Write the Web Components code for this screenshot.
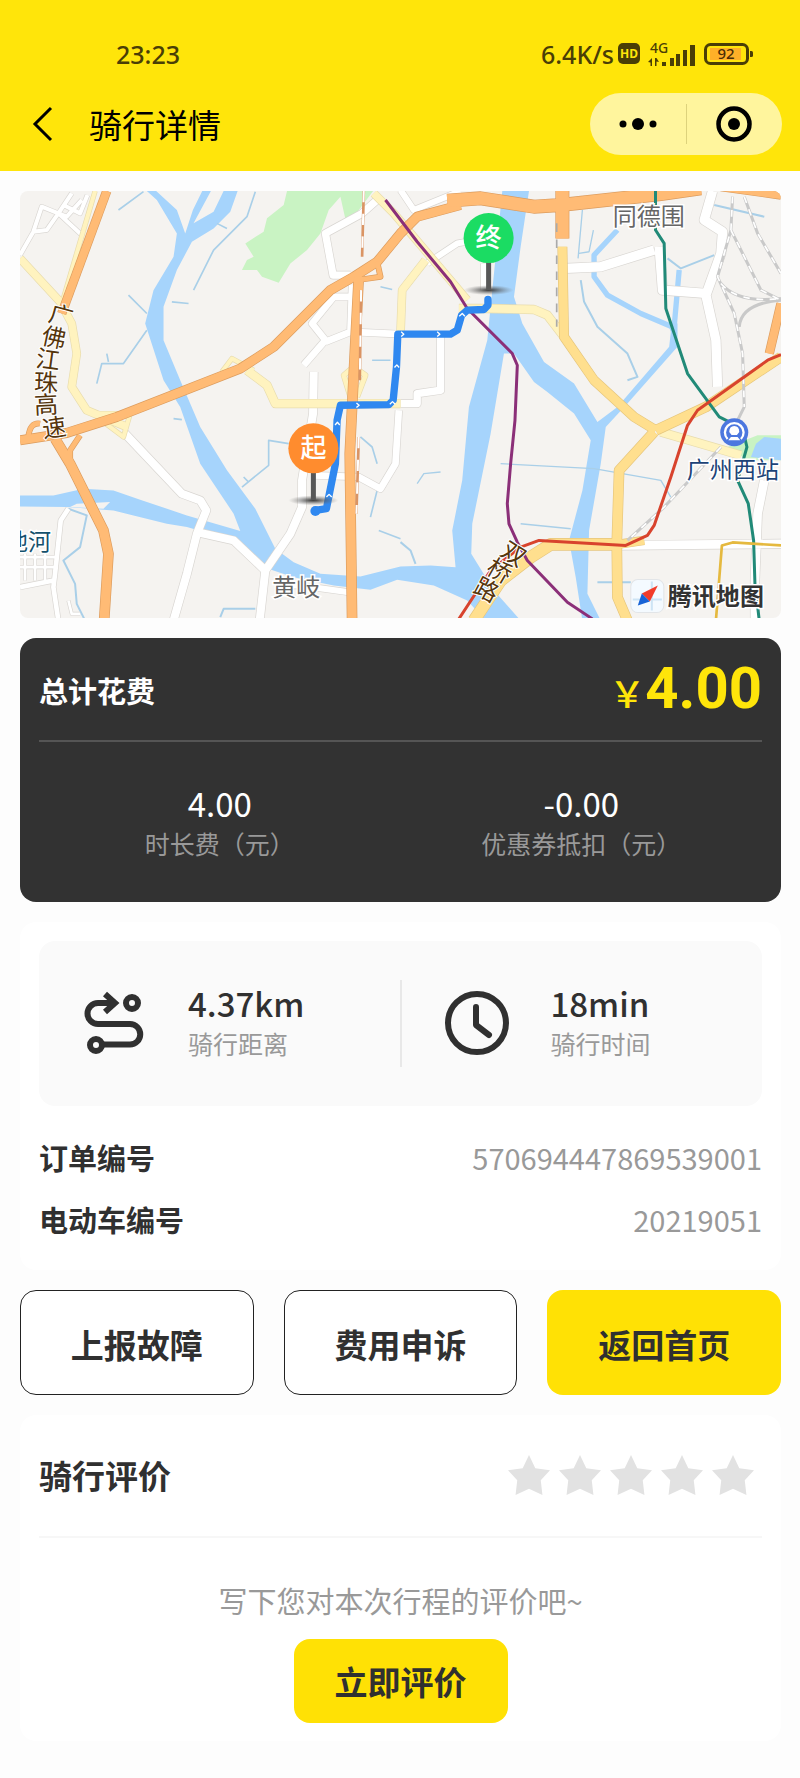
<!DOCTYPE html>
<html lang="zh-CN">
<head>
<meta charset="utf-8">
<meta name="viewport" content="width=device-width, initial-scale=1">
<title>骑行详情</title>
<style>
  body {
    margin: 0;
    background: #fdfdfd;
    color: #303030;
    font-family: "Noto Sans CJK SC", "Noto Sans", sans-serif;
  }
</style>
</head>
<body>
<ride-page>
  <ride-header slot="header">骑行详情</ride-header>
  <ride-map></ride-map>
  <cost-card total="4.00">
    <cost-item value="4.00">时长费（元）</cost-item>
    <cost-item value="-0.00">优惠券抵扣（元）</cost-item>
  </cost-card>
  <ride-info>
    <ride-stat slot="stats" icon="route" value="4.37km">骑行距离</ride-stat>
    <ride-stat slot="stats" icon="clock" value="18min">骑行时间</ride-stat>
    <info-row value="570694447869539001">订单编号</info-row>
    <info-row value="20219051">电动车编号</info-row>
  </ride-info>
  <button-row>
    <ride-button kind="outline">上报故障</ride-button>
    <ride-button kind="outline">费用申诉</ride-button>
    <ride-button>返回首页</ride-button>
  </button-row>
  <review-card>
    <span slot="title">骑行评价</span>
    <span slot="hint">写下您对本次行程的评价吧~</span>
    <ride-button slot="action" size="small">立即评价</ride-button>
  </review-card>
</ride-page>

<script>
// Attach an open shadow root filled with the given markup
function render(host, html) {
  const shadow = host.attachShadow({ mode: 'open' });
  const template = document.createElement('template');
  template.innerHTML = html;
  shadow.appendChild(template.content.cloneNode(true));
  return shadow;
}


class RidePage extends HTMLElement {
  constructor() {
    super();
    render(this, `
      <style>
        :host { display: block; }
        main {
          display: flex;
          flex-direction: column;
          gap: 20px;
          padding: 20px 19px 36px 20px;
        }
      </style>
      <slot name="header"></slot>
      <main><slot></slot></main>
    `);
  }
}
customElements.define('ride-page', RidePage);


// Status bar, back button, page title and the mini program capsule
class RideHeader extends HTMLElement {
  constructor() {
    super();
    render(this, `
      <style>
        :host { display: block; background: #ffe50a; padding-bottom: 16px; }
        .status {
          display: flex;
          align-items: center;
          padding: 37px 46px 0 116px;
          height: 34px;
          font: 500 25px/34px "Noto Sans", sans-serif;
          color: #4a3e06;
        }
        .speed { margin-left: auto; }
        .status svg { display: block; flex: none; overflow: visible; }
        .hd { margin: 0 8px 0 4px; }
        .signal { margin-right: 8px; }
        nav {
          display: flex;
          align-items: center;
          margin-top: 22px;
          padding: 0 18px 0 29px;
          color: #000;
        }
        button { border: 0; padding: 0; margin: 0; background: none; color: inherit; display: grid; place-items: center; }
        .back { width: 28px; height: 44px; }
        h1 { margin: 0 auto 0 32px; font-size: 33px; line-height: 48px; font-weight: 400; }
        .capsule {
          display: flex;
          align-items: center;
          width: 192px;
          height: 62px;
          border-radius: 31px;
          background: #fff59d;
        }
        .capsule button { flex: 1; height: 100%; }
        .capsule i { width: 1px; height: 40px; background: #ddd27c; }
      </style>
      <div class="status">
        <span>23:23</span>
        <span class="speed">6.4K/s</span>
        <svg class="hd" width="22" height="22" viewBox="0 0 22 22">
          <rect width="22" height="21" rx="5" fill="#4a3e06"/>
          <text x="11" y="15" text-anchor="middle" font-size="12" font-weight="700" fill="#ffe50a">HD</text>
        </svg>
        <svg class="signal" width="48" height="26" viewBox="0 0 48 26" fill="#4a3e06">
          <text x="2" y="12" font-size="14">4G</text>
          <path d="M4 17v8h-1.500v-3.500l-2.500-.5zM7 25v-8h1.500l2.500 4-2.500-.5V25z"/>
          <path d="M14 21h4v4h-4zM22 17h4v8h-4zM28 13h4v12h-4zM35 9h4v16h-4zM42 4h5v21h-5z"/>
        </svg>
        <svg width="50" height="22" viewBox="0 0 50 22">
          <rect x="1.500" y="1.500" width="42" height="19" rx="5" fill="none" stroke="#4a3e06" stroke-width="3"/>
          <rect x="6" y="5" width="31" height="12" fill="#ffb028"/>
          <path d="M46 8h1.500q1.500 0 1.500 1.500v3q0 1.500-1.500 1.500H46z" fill="#4a3e06"/>
          <text x="22" y="16" text-anchor="middle" font-size="15" font-weight="500" fill="#4a2c06">92</text>
        </svg>
      </div>
      <nav>
        <button class="back" aria-label="返回">
          <svg width="22" height="36" viewBox="0 0 22 36" fill="none" stroke="currentColor" stroke-width="3"><path d="M19 2 3 18l16 16"/></svg>
        </button>
        <h1><slot></slot></h1>
        <div class="capsule">
          <button aria-label="更多">
            <svg width="38" height="14" viewBox="0 0 38 14"><circle cx="4" cy="7" r="3.500"/><circle cx="19" cy="7" r="6"/><circle cx="34" cy="7" r="3.500"/></svg>
          </button>
          <i></i>
          <button aria-label="关闭">
            <svg width="36" height="36" viewBox="0 0 36 36"><circle cx="18" cy="18" r="15.500" fill="none" stroke="#000" stroke-width="4.500"/><circle cx="18" cy="18" r="6"/></svg>
          </button>
        </div>
      </nav>
    `);
  }
}
customElements.define('ride-header', RideHeader);


// Roads of the map, from the bottom layer to the top one.
// Each layer: fill colour, casing colour, then [width, path] pairs.
const ROADS = [
  ['#ffffff', '#d9d6d2', [
    [12, 'M60 225 L100 155 L125 80 L175 100 L215 40 M100 155 L140 150 L175 100 L245 165 M175 100 L200 110 L245 60 M190 75 L240 100 L262 45'],
    [22, 'M1130 60 L1085 100 L975 160 L998 285 L1050 285'],
    [20, 'M1055 315 L1050 460 M1050 350 L1000 350 L935 430 L975 480 L910 555 M975 485 L1050 455 L1200 462'],
    [24, 'M940 575 L938 700 L905 900 L905 980 L870 1060 L795 1170 L778 1320'],
    [20, 'M940 885 L1075 890 L1140 925 L1185 850 L1195 690'],
    [24, 'M370 755 L545 940 L600 960 L618 990 L590 1060 L560 1180 L520 1320'],
    [24, 'M590 1055 L700 1080 L795 1170'],
    [14, 'M205 985 L182 1020 L165 1180 L160 1220 L175 1320 M60 1220 L160 1200'],
    [8, 'M60 1130 H165 M60 1160 H165 M75 1120 V1200 M105 1120 V1200 M135 1120 V1200 M205 1260 L215 1300 L240 1300'],
    [18, 'M1200 30 L1240 90 L1380 33 M1280 250 L1370 190 L1400 185 M1450 250 V330'],
    [22, 'M1320 470 V630 L1250 640 V670 L1200 670'],
    [28, 'M1695 265 L1800 260 L1960 210 M1975 200 L1985 330 L2115 340'],
    [28, 'M2135 33 L2110 120 L2165 155 L2160 220 L2115 345 L2145 480 L2150 620'],
    [26, 'M1860 1095 L2340 1090 M2290 900 L2270 1000 L2262 1200 L2262 1320'],
    [18, 'M830 1215 L900 1215 L1045 1235']
  ]],
  ['#fff3bf', '#e8dcae', [
    [22, 'M60 235 L180 365 L215 430 L230 520 L215 620 L260 690 L380 740'],
    [12, 'M285 33 L190 355 M290 700 L390 700 L370 770 L290 710 M665 575 L695 535 L760 570'],
    [24, 'M740 570 L800 615 L825 670 L1200 670 M1375 385 L1460 385 L1600 388 L1640 405 L1690 470'],
    [14, 'M1060 560 L1030 585 L1050 650 M1060 560 L1095 585 L1070 650'],
    [22, 'M1120 40 L1180 100 L1400 360 M1200 460 L1205 330 L1275 240'],
    [24, 'M1980 755 L2220 825']
  ]],
  ['#ffdf8e', '#e6c67d', [
    [26, 'M1685 200 L1690 470 L1780 600 L1900 710 L1965 750'],
    [28, 'M1965 750 L2115 680 L2340 530 M1960 755 L1855 870 L1848 1090 L1850 1250 L1880 1320'],
    [34, 'M1850 1092 L1650 1092 L1590 1130 L1500 1200 L1420 1320'],
    [24, 'M1850 1092 L1930 1080']
  ]],
  ['#ffbb75', '#dc9c5e', [
    [24, 'M320 33 L185 400'],
    [26, 'M60 780 L200 758 L350 710 L720 565 L820 500 L990 330 L1060 290 L1130 245 L1200 160 L1250 110 L1380 75'],
    [14, 'M85 770 Q90 725 120 730 M240 765 L210 810 L210 850 M1130 245 L1140 290 L1070 300'],
    [28, 'M165 775 L210 850 L310 1050 L325 1120 L312 1320'],
    [28, 'M1075 290 L1065 480 L1048 820 L1055 1320'],
    [38, 'M1340 62 L1440 55 L1600 80 L1680 75 L1980 42 L2100 25 M1685 33 L1685 175'],
    [24, 'M2160 20 L2340 45 M2340 370 L2305 520']
  ]]
];

const THIN_WATER = [
  [5, 'M580 330 L640 210 L740 110 L765 35 M650 130 L680 145 M355 90 L430 35'],
  [5, 'M290 610 L305 550 L370 550 L440 450 M440 400 L385 345 M320 520 L325 545 M515 365 L565 370 M520 715 L545 718'],
  [5, 'M865 790 L805 780 L805 855 L725 920 M730 890 L745 905 M1080 770 L1115 800 L1130 850 M1130 930 L1110 1010 M1135 1050 L1200 1075 M1115 540 L1170 540 M1140 320 L1175 328'],
  [6, 'M205 985 L260 1005 L240 1100 L190 1140 L225 1210 L230 1270 L255 1320 M660 1310 L670 1285 L765 1285'],
  [4, 'M1735 220 L1765 215 L1778 150 M1745 90 L1732 235 M1500 850 L1780 865 L1980 900 L2010 950 M1250 910 L1270 880 L1320 875 M1560 1030 L1710 1045'],
  [6, 'M1750 365 L1790 440 L1880 520 L1910 590 L1880 600 M1740 300 L1750 365 M1790 1205 H1890 M2140 75 L2290 110 M2000 235 L2040 265 L2140 225 M1200 1085 L1230 1110 L1245 1150']
];

class RideMap extends HTMLElement {
  constructor() {
    super();
    const roads = ROADS.map(([fill, casing, list]) =>
      list.map(([w, d]) => `<path d="${d}" stroke="${casing}" stroke-width="${w + 4}"/>`).join('') +
      list.map(([w, d]) => `<path d="${d}" stroke="${fill}" stroke-width="${w}"/>`).join('')
    ).join('');
    const streams = THIN_WATER.map(([w, d]) => `<path d="${d}" stroke-width="${w}"/>`).join('');

    // Characters of a road name, each turned along its road: [char, x, y, angle]
    const roadName = (chars) => chars.map(([c, x, y, a]) =>
      `<text transform="translate(${x} ${y}) rotate(${a})" y="9">${c}</text>`).join('');

    const pin = (x, y, color, label) => `
      <g transform="translate(${x} ${y})">
        <ellipse cy="52" rx="25" ry="5" fill="url(#shade)"/>
        <path d="M0 22V52" stroke="#575757" stroke-width="5"/>
        <circle r="25" fill="${color}"/>
        <text y="9" text-anchor="middle" font-size="26" font-weight="500" fill="#fff">${label}</text>
      </g>`;

    render(this, `
      <style>
        :host { display: block; border-radius: 8px; overflow: hidden; background: #f5f3f0; }
        svg { display: block; width: 100%; height: auto; }
      </style>
      <svg viewBox="0 0 760 426" role="img" aria-label="骑行路线">
        <defs>
          <radialGradient id="shade">
            <stop offset="0" stop-color="#333"/>
            <stop offset="1" stop-color="#777" stop-opacity="0"/>
          </radialGradient>
        </defs>
        <g transform="translate(-20 -11) scale(.33333)" fill="none" stroke-linejoin="round">
          <path fill="#c9f3c3" d="M860 33 L1118 33 L1060 110 L1035 118 L1020 50 L985 90 L960 160 L920 210 L870 250 L835 308 L785 290 L770 270 L725 270 L740 240 L760 230 L735 190 L790 155 L800 115 L850 75Z M1078 33 L1112 33 L1035 118 L1030 80Z M2180 800 L2270 765 L2340 765 V840 L2240 840Z"/>
          <g fill="#a6d4fc">
            <path d="M440 33 H468 L530 90 L555 160 L578 90 L606 33 H632 L580 130 L640 95 L670 33 H712 L690 95 L640 145 L575 185 L530 270 L490 380 L490 480 L540 600 L600 740 L680 870 L765 985 L825 1105 L880 1145 L960 1180 L1080 1188 L1200 1158 L1290 1155 L1365 1160 L1355 1050 L1385 900 L1405 680 L1460 480 L1475 330 L1505 33 H1585 L1560 200 L1540 350 L1565 430 L1630 545 L1720 610 L1790 725 L1850 680 L2005 500 L2010 455 L2000 430 L2030 430 L2030 500 L1880 670 L1815 740 L1800 850 L1765 1050 L1760 1240 L1800 1320 H1745 L1725 1190 L1705 1080 L1745 930 L1770 780 L1720 700 L1640 635 L1600 605 L1540 520 L1510 520 L1470 760 L1415 1030 L1412 1120 L1480 1230 L1560 1320 H1455 L1400 1260 L1300 1215 L1190 1198 L1110 1228 L1000 1215 L880 1190 L790 1160 L700 1080 L560 1040 L500 1030 L400 1005 L340 990 L200 980 L60 978 V945 L160 945 L250 925 L340 930 L420 958 L560 1005 L720 1052 L700 1000 L600 850 L540 680 L490 600 L435 430 L460 330 L520 230 L530 160 L470 60Z"/>
            <path d="M2265 790 L2290 770 L2340 775 V840 L2250 830Z"/>
          </g>
          <path fill="#f5f3f0" d="M230 970 L330 965 L310 985 L210 980Z"/>
          <g stroke="#a6d4fc">
            <path stroke-width="16" d="M1850 150 L1780 225 L1780 290 L1820 345 L1920 400 L2010 438 M2020 440 L2035 270"/>
          </g>
          <g stroke="#a9cfe8">${streams}</g>
          ${roads}
          <g stroke="#c9c9c9" stroke-width="9">
            <path d="M2195 50 L2190 150 L2150 290 L2200 400 L2225 520 L2230 680 L2200 740 M2190 150 L2280 330 L2340 360 M2230 50 L2270 160 L2340 280 M2160 310 Q2210 370 2340 355 M2340 360 Q2220 370 2215 440 M2160 800 L1990 980 L1880 1080"/>
          </g>
          <path stroke="#fff" stroke-width="5" stroke-dasharray="20 20" d="M2195 50 L2190 150 L2150 290 L2200 400 L2225 520 L2230 680 M2190 150 L2280 330 L2340 360 M2230 50 L2270 160 L2340 280 M2160 310 Q2210 370 2340 355 M2160 800 L1990 980 L1880 1080"/>
          <g stroke-width="8">
            <path stroke="#da9464" d="M1090 33 L1085 230 M1082 330 L1078 600 M1075 770 L1068 1000"/>
            <path stroke="#fff" stroke-width="6" stroke-dasharray="34 34" d="M1090 33 L1085 230 M1082 330 L1078 600 M1075 770 L1068 1000"/>
            <path stroke="#aaa" stroke-width="5" stroke-dasharray="26 22" d="M1668 130 V440"/>
          </g>
          <g stroke-width="9">
            <path stroke="#8b2f78" d="M1155 60 L1250 185 L1350 305 L1400 385 L1535 520 L1550 555 L1543 720 L1530 850 L1520 970 L1525 1030 L1550 1085 L1580 1140 L1700 1265 L1775 1315"/>
            <path stroke="#218a78" d="M1964 33 V150 L1990 190 L1995 385 L2060 580 L2155 710 L2225 745 L2238 800 L2210 900 L2242 970 L2258 1080 L2262 1210 L2275 1320"/>
            <path stroke="#d8432d" d="M1375 1315 L1470 1170 L1560 1100 L1615 1080 L1875 1095 L1940 1065 L1960 1035 L2010 890 L2060 735 L2090 690 L2300 540 L2340 523"/>
            <path stroke="#e5b93f" stroke-width="8" d="M2145 1320 L2163 1095 L2195 1086 L2340 1095"/>
          </g>
          <path stroke="#2f88f0" stroke-width="22" stroke-linecap="round" d="M1462 358 V375 L1450 388 L1400 390 L1383 405 L1370 450 L1350 462 H1192 L1188 560 L1178 660 L1165 673 L1020 675 L1010 720 L1005 850 L985 950 L978 985 L945 990"/>
          <circle cx="945" cy="992" r="15" fill="#2f88f0"/>
          <path stroke="#fff" stroke-width="4" d="M1182 562 l7 -8 l7 8 M1068 668 l8 7 l-8 7 M1168 672 l8 -8 l8 8 M1202 455 l8 7 l-8 7 M1310 455 l8 7 l-8 7 M1376 408 l9 -8 l8 8 M1004 734 l7 -8 l7 8 M978 950 l8 -8 l8 8"/>
          <circle cx="2200" cy="756" r="42" fill="#4c77df"/>
          <path stroke="#fff" stroke-width="7" d="M2180 776 A28 28 0 1 1 2220 776"/>
          <path fill="#fff" d="M2185 755 q0 -18 15 -18 q15 0 15 18 l-7 9 h-16zM2190 770 h20 l8 10 h-36z"/>
        </g>
        <g font-size="24" fill="#666" stroke="#fff" stroke-width="3" paint-order="stroke">
          <text x="592" y="34">同德围</text>
          <text x="252" y="404">黄岐</text>
        </g>
        <g font-size="23" fill="#1d4377" stroke="#fff" stroke-width="3" paint-order="stroke">
          <text x="666" y="287">广州西站</text>
          <text x="-15" y="359" fill="#14506c">池河</text>
        </g>
        <g font-size="24" text-anchor="middle" fill="#55350c" stroke="#fff" stroke-width="2" paint-order="stroke">
          ${roadName([['广', 41, 124, 15], ['佛', 34, 146, 12], ['江', 28, 168, 8], ['珠', 26, 191, 2], ['高', 26, 213, -3], ['速', 34, 236, -8]])}
          ${roadName([['双', 493, 362, 32], ['桥', 479, 379, 30], ['路', 466, 398, 28]])}
        </g>
        ${pin(293, 257, '#ff8c2e', '起')}
        ${pin(468, 47, '#1bdc63', '终')}
        <rect x="610" y="388" width="33" height="33" rx="7" fill="#f4faff" stroke="#e2e5e8"/>
        <path d="M612 408h29M631 390v29" stroke="#cde4f5" stroke-width="2"/>
        <path d="M637 394 621 402l8 8z" fill="#f23c2a"/>
        <path d="M617 414 621 402l8 8z" fill="#1763d6"/>
        <text x="647" y="413" font-size="24" font-weight="700" fill="#333" stroke="#fff" stroke-width="3" paint-order="stroke">腾讯地图</text>
      </svg>
    `);
  }
}
customElements.define('ride-map', RideMap);


class CostCard extends HTMLElement {
  constructor() {
    super();
    render(this, `
      <style>
        :host { display: block; padding: 19px 19px 41px; border-radius: 16px; background: #323232; color: #fff; }
        header {
          display: flex;
          justify-content: space-between;
          align-items: center;
          height: 66px;
          padding-bottom: 17px;
          border-bottom: 2px solid #555;
        }
        h2 { margin: 0; font-size: 29px; line-height: 40px; font-weight: 700; }
        .total { display: flex; align-items: baseline; color: #ffe50a; font: 700 58px/66px Roboto, "Noto Sans CJK SC", sans-serif; }
        .total small { font: 500 36px/66px "Noto Sans CJK SC", sans-serif; }
        .items { display: flex; padding-top: 39px; }
      </style>
      <header>
        <h2>总计花费</h2>
        <div class="total"><small>￥</small><span>${this.getAttribute('total')}</span></div>
      </header>
      <div class="items"><slot></slot></div>
    `);
  }
}
customElements.define('cost-card', CostCard);


class CostItem extends HTMLElement {
  constructor() {
    super();
    render(this, `
      <style>
        :host { display: block; flex: 1; text-align: center; font-size: 25px; line-height: 36px; color: #999; }
        strong { display: block; font-size: 33px; line-height: 44px; font-weight: 400; color: #fff; }
      </style>
      <strong>${this.getAttribute('value')}</strong>
      <slot></slot>
    `);
  }
}
customElements.define('cost-item', CostItem);


class RideInfo extends HTMLElement {
  constructor() {
    super();
    render(this, `
      <style>
        :host { display: block; padding: 19px 19px 20px; border-radius: 16px; background: #fff; }
        .stats { display: flex; align-items: center; padding: 39px 0; border-radius: 16px; background: #fafafa; }
        ::slotted(ride-stat:nth-of-type(2)) { border-left: 2px solid #e8e8e8; }
        .rows { padding-top: 20px; }
      </style>
      <div class="stats"><slot name="stats"></slot></div>
      <div class="rows"><slot></slot></div>
    `);
  }
}
customElements.define('ride-info', RideInfo);


const ICONS = {
  route: `
    <path d="M30 12H16a10.500 10.500 0 0 0 0 21h32a10 10 0 0 1 0 20.500H22"/>
    <path d="M23 3l10 9-10 9" stroke-linecap="butt" stroke-linejoin="miter"/>
    <circle cx="50" cy="12" r="6"/>
    <circle cx="14" cy="54" r="6"/>`,
  clock: `
    <circle cx="32" cy="32" r="29"/>
    <path d="M31 16v18l13 10"/>`
};

class RideStat extends HTMLElement {
  constructor() {
    super();
    render(this, `
      <style>
        :host { display: flex; flex: 1; align-items: center; gap: 42px; padding-left: 43px; height: 87px; font-size: 25px; line-height: 34px; color: #999; }
        svg { flex: none; fill: none; stroke: #303030; stroke-width: 6px; stroke-linecap: round; stroke-linejoin: round; }
        .text { padding-bottom: 7px; }
        strong { display: block; font-size: 33px; line-height: 46px; font-weight: 500; color: #303030; }
      </style>
      <svg width="64" height="64" viewBox="0 0 64 64" aria-hidden="true">${ICONS[this.getAttribute('icon')]}</svg>
      <div class="text">
        <strong>${this.getAttribute('value')}</strong>
        <slot></slot>
      </div>
    `);
  }
}
customElements.define('ride-stat', RideStat);


class InfoRow extends HTMLElement {
  constructor() {
    super();
    render(this, `
      <style>
        :host { display: flex; justify-content: space-between; align-items: center; font-size: 29px; line-height: 62px; font-weight: 700; }
        span { color: #999; font-weight: 400; }
      </style>
      <slot></slot>
      <span>${this.getAttribute('value')}</span>
    `);
  }
}
customElements.define('info-row', InfoRow);


class ButtonRow extends HTMLElement {
  constructor() {
    super();
    render(this, `
      <style>
        :host { display: grid; grid-template-columns: repeat(3, 1fr); gap: 30px; }
      </style>
      <slot></slot>
    `);
  }
}
customElements.define('button-row', ButtonRow);


class RideButton extends HTMLElement {
  constructor() {
    super();
    render(this, `
      <style>
        :host { display: block; }
        button {
          box-sizing: border-box;
          width: 100%;
          min-height: 105px;
          padding: 4px 41px 0;
          border: 0;
          border-radius: 16px;
          background: #ffe105;
          color: #303030;
          font: inherit;
          font-size: 33px;
          line-height: 48px;
          font-weight: 700;
        }
        :host([kind="outline"]) button { border: 1px solid #222; background: #fff; }
        :host([size="small"]) button { min-height: 84px; padding-top: 0; }
      </style>
      <button type="button"><slot></slot></button>
    `);
  }
}
customElements.define('ride-button', RideButton);


class StarRating extends HTMLElement {
  constructor() {
    super();
    const stars = [1, 2, 3, 4, 5].map((n) =>
      `<input type="radio" name="score" value="${n}" aria-label="${n}星">`).join('');
    render(this, `
      <style>
        :host { display: block; }
        div { display: flex; gap: 9px; }
        input {
          appearance: none;
          margin: 0;
          width: 42px;
          height: 40px;
          background: #e2e2e2;
          clip-path: polygon(50% 0, 65% 33%, 100% 38%, 78% 63%, 82% 100%, 50% 84%, 18% 100%, 22% 63%, 0 38%, 35% 33%);
        }
      </style>
      <div role="radiogroup" aria-label="评分">${stars}</div>
    `);
  }
}
customElements.define('star-rating', StarRating);


class ReviewCard extends HTMLElement {
  constructor() {
    super();
    render(this, `
      <style>
        :host { display: block; padding: 0 19px 18px; border-radius: 16px; background: #fff; }
        header {
          display: flex;
          justify-content: space-between;
          align-items: center;
          height: 121px;
          padding-right: 8px;
          border-bottom: 2px solid #f7f7f7;
        }
        h2 { margin: 0; font-size: 33px; line-height: 48px; font-weight: 700; }
        p { margin: 41px 0 18px; text-align: center; font-size: 29px; line-height: 42px; color: #999; }
        .action { display: flex; justify-content: center; }
      </style>
      <header>
        <h2><slot name="title"></slot></h2>
        <star-rating></star-rating>
      </header>
      <p><slot name="hint"></slot></p>
      <div class="action"><slot name="action"></slot></div>
    `);
  }
}
customElements.define('review-card', ReviewCard);
</script>
</body>
</html>
